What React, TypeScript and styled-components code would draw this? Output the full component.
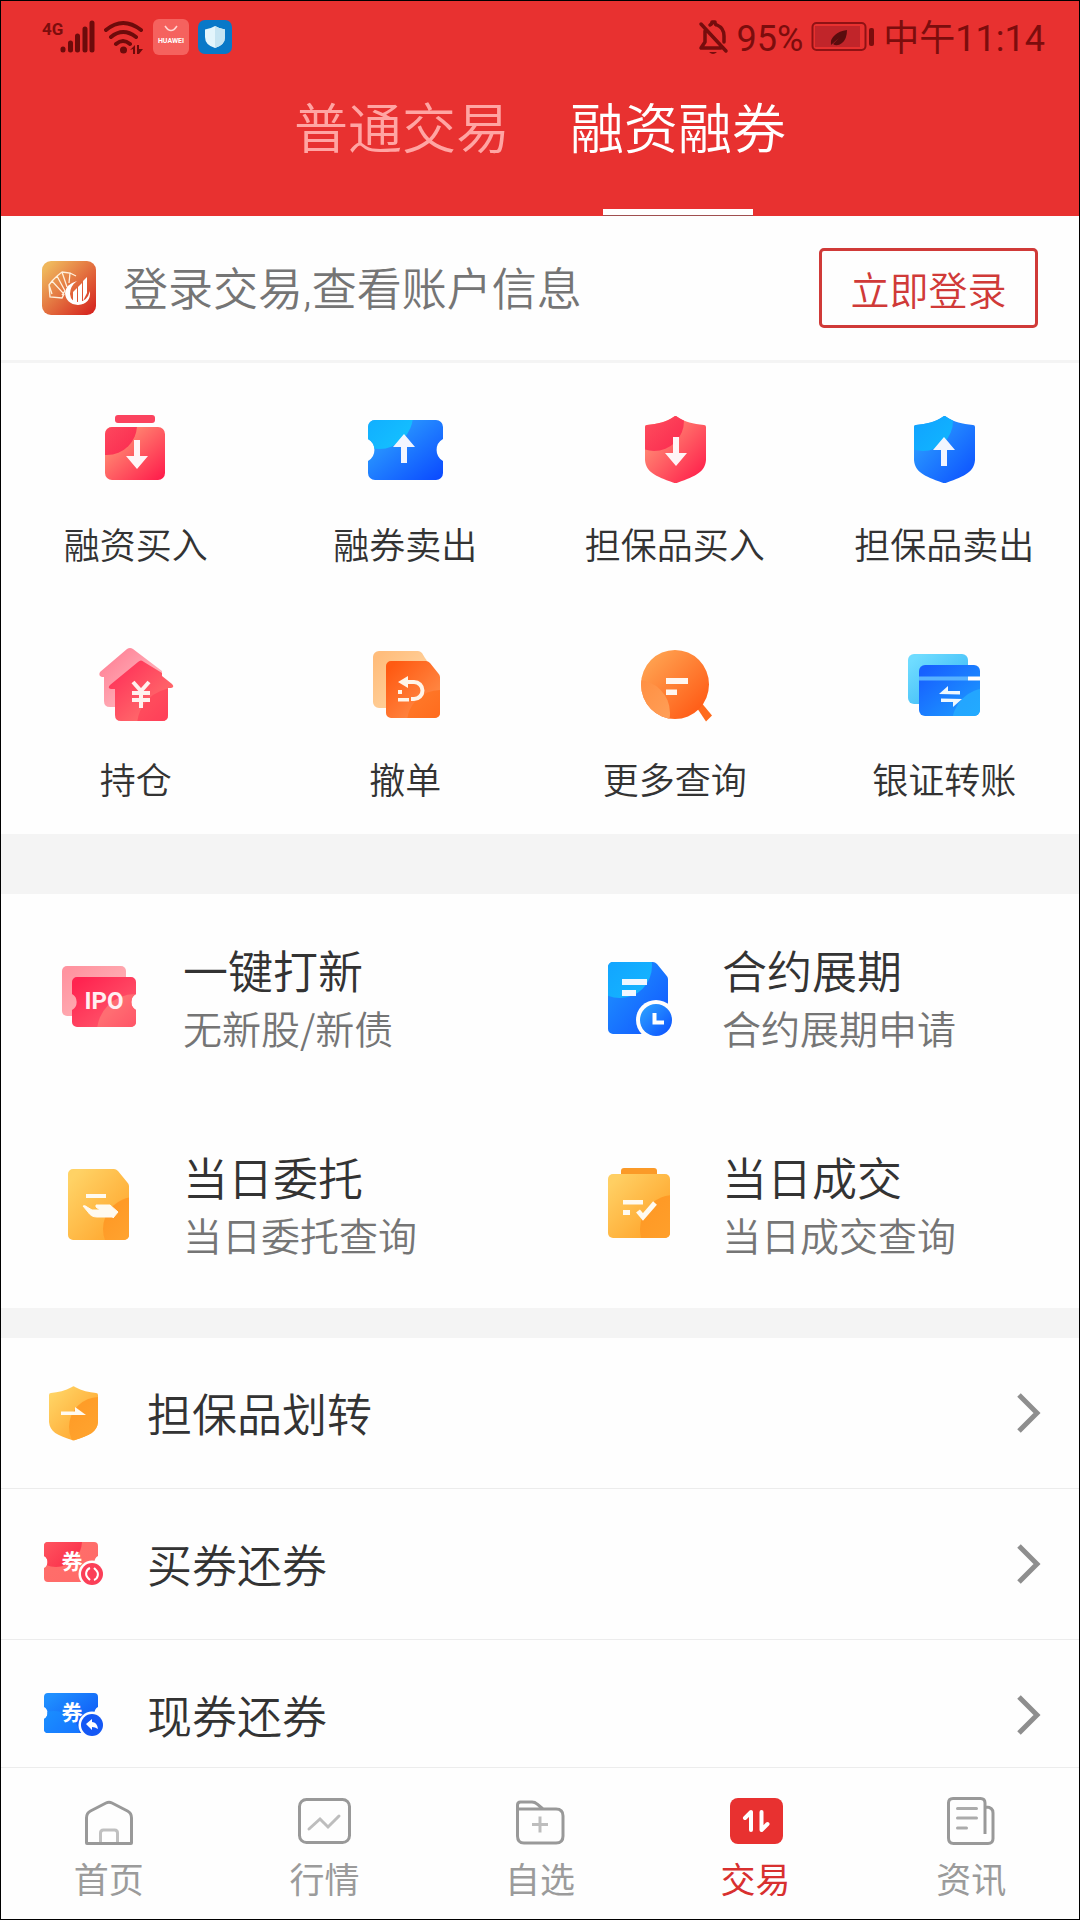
import React, { useId } from "react";
import styled, { createGlobalStyle, css } from "styled-components";

const RED = "#e83130";
const CJK = `"Noto Sans CJK SC", sans-serif`;

const GlobalStyle = createGlobalStyle`
  *, *::before, *::after { box-sizing: border-box; }
  body { margin: 0; background: #fff; }
  button { border: 0; padding: 0; background: none; font: inherit; color: inherit; cursor: pointer; }
  a { color: inherit; text-decoration: none; }
  svg { display: block; flex: none; }
`;

const Screen = styled.div`
  display: flex;
  flex-direction: column;
  height: 100vh;
  border: 1px solid #000;
  background: #fefefe;
  font-family: ${CJK};
  font-weight: 350;
  color: #333;
`;

const Header = styled.header`
  flex: none;
  background: ${RED};
`;

const StatusBar = styled.div`
  display: flex;
  justify-content: space-between;
  height: 72px;
  padding: 0 34px 0 40px;
  color: #7c0d0d;
  font-family: Roboto, ${CJK};
  font-size: 36px;
  font-weight: 400;
  line-height: 68px;
`;

const StatusText = styled.span`
  padding-top: 3px;
`;

const StatusGroup = styled.div<{ $gap: number }>`
  display: flex;
  align-items: center;
  gap: ${(p) => p.$gap}px;
`;

const Tabs = styled.div`
  display: flex;
  justify-content: center;
`;

const Tab = styled.button<{ $active?: boolean }>`
  display: flex;
  flex-direction: column;
  align-items: center;
  justify-content: space-between;
  width: 276px;
  height: 143px;
  padding-top: 13px;
  font-size: 54px;
  line-height: 80px;
  color: ${(p) => (p.$active ? "#fff" : "#ffa5a3")};

  &::after {
    content: "";
    width: 150px;
    height: 7px;
    background: ${(p) => (p.$active ? "#fff" : "transparent")};
    border-bottom: 1px solid ${(p) => (p.$active ? "#a04f4f" : "transparent")};
  }
`;

const Content = styled.main`
  flex: 1;
  min-height: 0;
  overflow-y: auto;
  scrollbar-width: none;
`;

const LoginBar = styled.section`
  display: flex;
  align-items: center;
  height: 147px;
  padding: 0 41px;
  border-bottom: 3px solid #f4f4f4;
`;

const LoginText = styled.p`
  flex: 1;
  margin: 0 0 0 27px;
  padding-top: 5px;
  font-family: Roboto, ${CJK};
  font-size: 45px;
  line-height: 66px;
  color: #757575;
`;

const LoginButton = styled.button`
  width: 219px;
  height: 80px;
  border: 3px solid #d03a38;
  border-radius: 5px;
  font-size: 39px;
  line-height: 72px;
  color: #d03a38;
`;

const ActionGrid = styled.section`
  display: grid;
  grid-template-columns: repeat(4, 1fr);
  padding-top: 1px;
`;

const Action = styled.button`
  display: flex;
  flex-direction: column;
  align-items: center;
  gap: 26px;
  height: 235px;
  padding-top: 46px;
  font-size: 36px;
  line-height: 54px;
`;

const Band = styled.div<{ $height: number }>`
  height: ${(p) => p.$height}px;
  background: #f4f4f4;
`;

const FeatureGrid = styled.section`
  display: grid;
  grid-template-columns: repeat(2, 1fr);
`;

const Feature = styled.button`
  display: flex;
  align-items: center;
  gap: 44px;
  height: 207px;
  padding: 4px 0 0 58px;
  text-align: left;
`;

const FeatureText = styled.span`
  display: block;
  padding-bottom: 5px;
`;

const FeatureTitle = styled.span`
  display: block;
  font-size: 45px;
  line-height: 60px;
`;

const FeatureNote = styled.span`
  display: block;
  font-size: 39px;
  line-height: 54px;
  color: #757575;
`;

const List = styled.ul`
  margin: 0;
  padding: 0;
  list-style: none;
`;

const ListItem = styled.li`
  border-bottom: 1px solid #ececec;
`;

const ListRow = styled.button`
  display: flex;
  align-items: center;
  width: 100%;
  height: 150px;
  padding: 0 38px 0 41px;
  font-size: 45px;
  line-height: 66px;
`;

const ListLabel = styled.span`
  flex: 1;
  margin-left: 41px;
  text-align: left;
`;

const NavBar = styled.nav`
  display: flex;
  flex: none;
  height: 152px;
  border-top: 1px solid #ececec;
`;

const NavLink = styled.a<{ $active?: boolean }>`
  flex: 1;
  display: flex;
  flex-direction: column;
  align-items: center;
  padding-top: 28px;
  font-size: 35px;
  line-height: 52px;
  font-weight: 400;
  color: #9b9b9b;
  ${(p) =>
    p.$active &&
    css`
      color: #d8302f;
    `}
`;

type Glow = { cx: number; cy: number; r: number; from: string; to: string };

/* A gradient silhouette with a circular highlight cut to its outline. */
function Shape({ d, from, to, glow }: { d: string; from: string; to: string; glow?: Glow }) {
  const id = useId().replace(/[^a-zA-Z0-9]/g, "");
  return (
    <>
      <defs>
        <linearGradient id={`${id}a`} x1="0" y1="0" x2="1" y2="1">
          <stop offset="0.1" stopColor={from} />
          <stop offset="0.95" stopColor={to} />
        </linearGradient>
        {glow && (
          <linearGradient id={`${id}b`} x1="0" y1="0" x2="1" y2="1">
            <stop offset="0.2" stopColor={glow.from} />
            <stop offset="0.9" stopColor={glow.to} />
          </linearGradient>
        )}
        <clipPath id={`${id}c`}>
          <path d={d} />
        </clipPath>
      </defs>
      <path d={d} fill={`url(#${id}a)`} />
      {glow && (
        <circle cx={glow.cx} cy={glow.cy} r={glow.r} fill={`url(#${id}b)`} clipPath={`url(#${id}c)`} />
      )}
    </>
  );
}

const box = (x: number, y: number, w: number, h: number, r: number) =>
  `M${x + r} ${y}h${w - 2 * r}a${r} ${r} 0 0 1 ${r} ${r}v${h - 2 * r}a${r} ${r} 0 0 1 ${-r} ${r}h${-(w - 2 * r)}a${r} ${r} 0 0 1 ${-r} ${-r}v${-(h - 2 * r)}a${r} ${r} 0 0 1 ${r} ${-r}z`;

const ticket = (x: number, y: number, w: number, h: number, r: number, n: number) => {
  const side = h / 2 - r - n;
  return `M${x + r} ${y}h${w - 2 * r}a${r} ${r} 0 0 1 ${r} ${r}v${side}a${n * 1.15} ${n * 1.15} 0 0 0 0 ${2 * n}v${side}a${r} ${r} 0 0 1 ${-r} ${r}h${-(w - 2 * r)}a${r} ${r} 0 0 1 ${-r} ${-r}v${-side}a${n * 1.15} ${n * 1.15} 0 0 0 0 ${-2 * n}v${-side}a${r} ${r} 0 0 1 ${r} ${-r}z`;
};

const cutSheet = (x: number, y: number, w: number, h: number, r: number, c: number) =>
  `M${x + r} ${y}h${w - r - c - 2}q2 0 4 2l${c - 4} ${c - 2}q2 2 2 4v${h - c - r - 4}a${r} ${r} 0 0 1 ${-r} ${r}h${-(w - 2 * r)}a${r} ${r} 0 0 1 ${-r} ${-r}v${-(h - 2 * r)}a${r} ${r} 0 0 1 ${r} ${-r}z`;

const SHIELD =
  "M38.5 7Q40.5 5 42.5 7C50 12 58 14 69 15Q71 15 71 17V50C70 62 61 66 43 72.500Q40.500 73.500 38 72.500C20 66 11 62 10 50V17Q10 15 12 15C23 14 31 12 38.500 7Z";

const Icon = ({ children, size = 80 }: { children: React.ReactNode; size?: number }) => (
  <svg width={size} height={size} viewBox={`0 0 ${size} ${size}`} fill="none" aria-hidden="true">
    {children}
  </svg>
);

const MarginBuy = () => (
  <Icon>
    <rect x="19" y="5" width="40" height="8" rx="3" fill="#fb435f" />
    <Shape d={box(9, 17, 60, 53, 7)} from="#ff9a78" to="#ff1f4c" glow={{ cx: 11, cy: 15, r: 30, from: "#ff5a66", to: "#fb2f52" }} />
    <path d="M38 30h6v16h8L41 59 30 46h8z" fill="#fff5f7" />
  </Icon>
);

const ShortSell = () => (
  <Icon>
    <Shape d={ticket(3, 10, 75, 60, 7, 11)} from="#2fa6ff" to="#0c4dff" glow={{ cx: 14, cy: 5, r: 34, from: "#10a5ff", to: "#14c0ff" }} />
    <path d="M39 24l11 13h-8v16h-6V37h-8z" fill="#f1f5ff" />
  </Icon>
);

const PledgeBuy = () => (
  <Icon>
    <Shape d={SHIELD} from="#ff9a7a" to="#ff1c4a" glow={{ cx: 19, cy: 11, r: 30, from: "#ff5a62", to: "#fb2e51" }} />
    <path d="M38 27h6v16h8L41 56 30 43h8z" fill="#fff5f7" />
  </Icon>
);

const PledgeSell = () => (
  <Icon>
    <Shape d={SHIELD} from="#2ea3ff" to="#0d52ff" glow={{ cx: 19, cy: 11, r: 30, from: "#129bff", to: "#10b4ff" }} />
    <path d="M40 27l11 13h-8v16h-6V40h-8z" fill="#f1f5ff" />
  </Icon>
);

const Holdings = () => (
  <Icon>
    <Shape
      d="M31 4Q34 2 37 4L66 26V62H14Q8 62 8 56V32H6Q2 31 4 27Z"
      from="#ff8095"
      to="#ffc4c8"
    />
    <Shape
      d="M42 17Q45 14 48 17L66 28V31L76 39Q79 42 75 43H72V70Q72 76 66 76H25Q19 76 19 70V44H15Q11 43 14 40Z"
      from="#ff3058"
      to="#ff7a70"
      glow={{ cx: 79, cy: 81, r: 38, from: "#ff4a5c", to: "#ff2350" }}
    />
    <path d="M37 37l8 9 8-9M45 46v17M36 48h18M36 55h18" stroke="#fff1ee" strokeWidth="4" />
  </Icon>
);

const CancelOrder = () => (
  <Icon>
    <Shape d={cutSheet(8, 6, 54, 57, 6, 7)} from="#ffbd7c" to="#ffd9a8" />
    <Shape d={cutSheet(21, 16, 54, 57, 5, 12)} from="#ff5a12" to="#ff9350" glow={{ cx: 75, cy: 78, r: 33, from: "#ff7526", to: "#ff5c10" }} />
    <path d="M33 37l10-6v4h6a10.500 10.500 0 0 1 0 21h-3v-4h3a6.500 6.500 0 0 0 0-13h-6v4z" fill="#fff4e8" />
    <path d="M33 45h4v4h-4zM33 53h11v3.500H33z" fill="#fff4e8" />
  </Icon>
);

const MoreSearch = () => (
  <Icon>
    <path d="M60 60l5-4 12 14.500-6 6z" fill="#ff6a1c" />
    <Shape d="M6 39.500a34 34.500 0 1 0 68 0a34 34.500 0 1 0 -68 0z" from="#ffa452" to="#ff5511" glow={{ cx: 2, cy: 68, r: 33, from: "#ff8d3f", to: "#ffa25c" }} />
    <path d="M31 33h22v6H31zM31 44.500h11v5.500H31z" fill="#fff6f0" />
  </Icon>
);

const BankTransfer = () => (
  <Icon>
    <Shape d={box(4, 9, 60, 50, 6)} from="#6fdcff" to="#35b4f5" />
    <Shape d={box(15, 20, 61, 51, 6)} from="#1760ff" to="#1d9cff" glow={{ cx: 84, cy: 79, r: 36, from: "#23a6ff", to: "#1fb9ff" }} />
    <path d="M15 31.500h49v4H15z" fill="#58b2ff" />
    <path d="M64 31.500h12v4H64z" fill="#fff" />
    <path d="M35 49l9-8v5h12v3.500zM58 54l-9 8v-5H37v-3.500z" fill="#eef8ff" />
  </Icon>
);

const Ipo = () => (
  <Icon>
    <Shape d={box(3, 6, 64, 50, 5)} from="#ff94a0" to="#ffb9bc" />
    <Shape d={ticket(13, 17, 64, 50, 5, 8)} from="#ff2450" to="#ff6070" glow={{ cx: 76, cy: 72, r: 38, from: "#ff6d72", to: "#ff2f57" }} />
    <text x="45" y="49" textAnchor="middle" fontFamily="Roboto, sans-serif" fontSize="24" fontWeight="700" fill="#fff0f2">
      IPO
    </text>
  </Icon>
);

const Contract = () => (
  <Icon>
    <Shape d={cutSheet(10, 2, 60, 72, 5, 13)} from="#1e90ff" to="#1258ff" glow={{ cx: 22, cy: 6, r: 32, from: "#12a0ff", to: "#14b4ff" }} />
    <path d="M24 19h25v6H24zM24 30h14v6H24z" fill="#f0f7ff" />
    <circle cx="58" cy="60" r="20" fill="#fefefe" />
    <Shape d={box(42, 44, 32, 32, 16)} from="#2a9dff" to="#0d53ff" />
    <path d="M56.500 53v9.500H66" stroke="#fff" strokeWidth="4" />
  </Icon>
);

const Entrust = () => (
  <Icon>
    <Shape d={cutSheet(9, 2, 61, 71, 5, 13)} from="#ffd265" to="#ffa32a" glow={{ cx: 76, cy: 62, r: 32, from: "#ff9a26", to: "#ffad3a" }} />
    <path d="M27 27h20v4H27z" fill="#fffaf0" />
    <path d="M24 39q2-1 4 1l5 3h8l-4-3v-2h14l8 7-5 6v-1H38q-6 0-9-5z" fill="#fffaf0" stroke="#fffaf0" strokeLinejoin="round" />
  </Icon>
);

const Deals = () => (
  <Icon>
    <path d="M23 8V4q0-3 3-3h30q3 0 3 3v4z" fill="#fb9a28" />
    <Shape d={box(10, 7, 62, 64, 5)} from="#ffcf63" to="#ff9f24" glow={{ cx: 76, cy: 62, r: 34, from: "#ff9a26", to: "#ffa530" }} />
    <path d="M25 33h20v4.500H25zM25 43h7v5h-7z" fill="#fffaf0" />
    <path d="M40 44l5 6 12-14" stroke="#fffaf0" strokeWidth="5" />
  </Icon>
);

const TransferShield = () => (
  <Icon size={64}>
    <Shape
      d="M30 6Q31.500 4.500 33 6C40 10 47 11 54 12Q56 12 56 14V41C55 51 48 54 33 59Q31.500 59.500 30 59C15 54 8 51 7 41V14Q7 12 9 12C16 11 23 10 30 6Z"
      from="#ffd364"
      to="#ff9f28"
      glow={{ cx: 57, cy: 46, r: 30, from: "#ff9d28", to: "#ffab36" }}
    />
    <path d="M19 30.500h14v-4.500l11 8H19z" fill="#fffaf0" />
  </Icon>
);

const couponText = (
  <text x="30" y="37" textAnchor="middle" fontFamily={CJK} fontSize="21" fontWeight="700" fill="#fff">
    券
  </text>
);

const CouponRed = () => (
  <Icon size={64}>
    <Shape d={ticket(2, 10, 54, 40, 4, 6)} from="#ff6f6b" to="#ff6a68" glow={{ cx: 14, cy: 9, r: 26, from: "#ff6468", to: "#fb2f4a" }} />
    {couponText}
    <circle cx="50" cy="42" r="13.500" fill="#fefefe" />
    <circle cx="50" cy="42" r="11" fill="#fb3f58" />
    <path d="M48 36a6 6 0 0 0-2 10l2 2M52 48a6 6 0 0 0 2-10l-2-2" stroke="#fff" strokeWidth="2" />
  </Icon>
);

const CouponBlue = () => (
  <Icon size={64}>
    <Shape d={ticket(2, 10, 54, 40, 4, 6)} from="#2090ff" to="#0b50f5" glow={{ cx: 12, cy: 54, r: 26, from: "#1a8dff", to: "#146cff" }} />
    {couponText}
    <circle cx="50" cy="42" r="13.500" fill="#fefefe" />
    <circle cx="50" cy="42" r="11" fill="#1458f5" />
    <path d="M44 41l6-5v3q5 0 6 7-3-2-6-2v3z" fill="#fff" />
  </Icon>
);

const Chevron = () => (
  <svg width="26" height="42" viewBox="0 0 26 42" fill="none" aria-hidden="true">
    <path d="M4 3l18 18L4 39" stroke="#8e8e8e" strokeWidth="5" />
  </svg>
);

const HomeIcon = () => (
  <Icon size={56}>
    <path d="M19.500 48V37q0-3 3-3h11q3 0 3 3v11" stroke="#c0c0c0" strokeWidth="3" />
    <path d="M5.500 47V22q0-5 4-7L25 7q3-1.500 6 0l15.500 8q4 2 4 7v25q0 .5-.5.5H6q-.5 0-.5-.5z" stroke="#999" strokeWidth="3" />
  </Icon>
);

const ChartIcon = () => (
  <Icon size={56}>
    <rect x="3.500" y="3.500" width="50" height="43" rx="7" stroke="#999" strokeWidth="3" />
    <path d="M13 33l11-10 8 8 11-11" stroke="#bdbdbd" strokeWidth="3" strokeLinecap="round" />
  </Icon>
);

const FolderIcon = () => (
  <Icon size={56}>
    <path d="M5.500 13V9q0-3 3-3H20q3 0 5 2l6 5h13q7 0 7 7v20q0 7-7 7H12q-6.500 0-6.500-7zh26" stroke="#999" strokeWidth="3" />
    <path d="M20 28.500h16M28 20.500v16" stroke="#bdbdbd" strokeWidth="3" />
  </Icon>
);

const TradeIcon = () => (
  <Icon size={56}>
    <rect x="2" y="2" width="53" height="46" rx="8" fill={RED} />
    <path d="M17 22l6-6v18M33.500 16v18l6-6" stroke="#fff" strokeWidth="4" strokeLinecap="round" strokeLinejoin="round" />
  </Icon>
);

const NewsIcon = () => (
  <Icon size={56}>
    <path d="M42 38V7q0-4.500-4.500-4.500H10Q5.500 2.500 5.500 7v35q0 5.500 5 5.500H45q5 0 5-5V17q0-6-7-6" stroke="#999" strokeWidth="3" />
    <path d="M14.500 12.500h19M14.500 22h19M14.500 32h9" stroke="#ababab" strokeWidth="3" strokeLinecap="round" />
  </Icon>
);

const BrandLogo = () => (
  <svg width="54" height="54" viewBox="0 0 54 54" fill="none" aria-hidden="true">
    <Shape d={box(0, 0, 54, 54, 9)} from="#efb65c" to="#d6251f" />
    <path
      d="M7 24l3-4 12 13-2 4-12-1zM10 20l5-5 8 15-3 4M15 15l5-4 5 15M20 11l8 1-1 10M28 12l6 3M7 24l3 9"
      stroke="#fff0dc"
      strokeWidth="1.300"
    />
    <path d="M35 20q-7 5-7 13 1 8 8 8 9 0 12-11 1 13-12 14-12-1-13-12 1-9 12-12z" fill="#fff" />
    <path d="M31 31l4-4v15h-4zM36 26l4-4v20h-4zM41 20l4-4v16l-4 8z" fill="#fff" />
  </svg>
);

const LeftStatus = () => (
  <StatusGroup $gap={9}>
    <svg width="54" height="36" viewBox="0 0 54 36" aria-hidden="true">
      <text x="1" y="16" fontFamily="Roboto, sans-serif" fontSize="17" fontWeight="700" fill="#7c0d0d">4G</text>
      <g stroke="#6d0b0b" strokeWidth="5" strokeLinecap="round">
        <path d="M22 31v-1M29.500 31v-7M36.500 31V17M44 31V10M51 31V4" />
      </g>
    </svg>
    <svg width="40" height="36" viewBox="0 0 40 36" fill="none" aria-hidden="true">
      <path d="M2 11Q19-3 37 11M7 18q12-10 25 0M12 25q7-6 14 0" stroke="#6d0b0b" strokeWidth="4" strokeLinecap="round" />
      <circle cx="19.500" cy="31" r="3.500" fill="#6d0b0b" />
      <path d="M26 31l5-5v9h-2v-5zM33 26h2v4l4 0-4 5h-2z" fill="#6d0b0b" />
    </svg>
    <svg width="36" height="36" viewBox="0 0 36 36" fill="none" aria-hidden="true">
      <rect width="36" height="36" rx="6" fill="#f5625e" />
      <path d="M12 7q6 9 12 0" stroke="#ffd5d2" strokeWidth="1.500" />
      <text x="18" y="24" textAnchor="middle" fontFamily="Roboto, sans-serif" fontSize="7" fontWeight="700" fill="#fff">HUAWEI</text>
    </svg>
    <svg width="34" height="34" viewBox="0 0 34 34" aria-hidden="true">
      <rect width="34" height="34" rx="7" fill="#0878c8" />
      <path d="M17 6q5 3 10 3.500V17q0 8-10 11Q7 25 7 17V9.500Q12 9 17 6z" fill="#e3f5fc" />
      <path d="M17 6q5 3 10 3.500V17q0 8-10 11z" fill="#c5e4f2" />
    </svg>
  </StatusGroup>
);

const RightStatus = () => (
  <StatusGroup $gap={8}>
    <svg width="32" height="36" viewBox="0 0 32 36" fill="none" aria-hidden="true">
      <g stroke="#760d0d" strokeWidth="3.500" strokeLinecap="round" strokeLinejoin="round">
        <path d="M4 5l25 27M13 6q2-1 2-3h3q0 3 2 3 7 3 7 11v6M8 12v11l-4 6h20" />
      </g>
      <path d="M12 33h8q-4 4-8 0z" fill="#760d0d" />
    </svg>
    <StatusText>95%</StatusText>
    <svg width="64" height="32" viewBox="0 0 64 32" fill="none" aria-hidden="true">
      <rect x="1.500" y="2" width="53" height="27" rx="4" stroke="#8f1214" strokeWidth="2" />
      <rect x="4" y="5" width="45" height="21" fill="#c1252a" />
      <path d="M20 24q-1-6 4-10 4-4 12-5 0 9-5 13-5 4-9 1l6-6-8 7z" fill="#5a0c0e" />
      <rect x="58" y="7" width="5" height="18" rx="2" fill="#7c0d0d" />
    </svg>
    <StatusText>中午11:14</StatusText>
  </StatusGroup>
);

const actions = [
  { label: "融资买入", Glyph: MarginBuy },
  { label: "融券卖出", Glyph: ShortSell },
  { label: "担保品买入", Glyph: PledgeBuy },
  { label: "担保品卖出", Glyph: PledgeSell },
  { label: "持仓", Glyph: Holdings },
  { label: "撤单", Glyph: CancelOrder },
  { label: "更多查询", Glyph: MoreSearch },
  { label: "银证转账", Glyph: BankTransfer },
];

const features = [
  { title: "一键打新", note: "无新股/新债", Glyph: Ipo },
  { title: "合约展期", note: "合约展期申请", Glyph: Contract },
  { title: "当日委托", note: "当日委托查询", Glyph: Entrust },
  { title: "当日成交", note: "当日成交查询", Glyph: Deals },
];

const rows = [
  { label: "担保品划转", Glyph: TransferShield },
  { label: "买券还券", Glyph: CouponRed },
  { label: "现券还券", Glyph: CouponBlue },
];

const navItems = [
  { label: "首页", Glyph: HomeIcon },
  { label: "行情", Glyph: ChartIcon },
  { label: "自选", Glyph: FolderIcon },
  { label: "交易", Glyph: TradeIcon, active: true },
  { label: "资讯", Glyph: NewsIcon },
];

export default function App() {
  return (
    <>
      <GlobalStyle />
      <Screen lang="zh-CN">
        <Header>
          <StatusBar>
            <LeftStatus />
            <RightStatus />
          </StatusBar>
          <Tabs role="tablist">
            <Tab role="tab" aria-selected={false}>普通交易</Tab>
            <Tab role="tab" aria-selected $active>融资融券</Tab>
          </Tabs>
        </Header>
        <Content>
          <LoginBar>
            <BrandLogo />
            <LoginText>登录交易,查看账户信息</LoginText>
            <LoginButton>立即登录</LoginButton>
          </LoginBar>
          <ActionGrid>
            {actions.map(({ label, Glyph }) => (
              <Action key={label}>
                <Glyph />
                {label}
              </Action>
            ))}
          </ActionGrid>
          <Band $height={60} />
          <FeatureGrid>
            {features.map(({ title, note, Glyph }) => (
              <Feature key={title}>
                <Glyph />
                <FeatureText>
                  <FeatureTitle>{title}</FeatureTitle>
                  <FeatureNote>{note}</FeatureNote>
                </FeatureText>
              </Feature>
            ))}
          </FeatureGrid>
          <Band $height={30} />
          <List>
            {rows.map(({ label, Glyph }) => (
              <ListItem key={label}>
                <ListRow>
                  <Glyph />
                  <ListLabel>{label}</ListLabel>
                  <Chevron />
                </ListRow>
              </ListItem>
            ))}
          </List>
        </Content>
        <NavBar>
          {navItems.map(({ label, Glyph, active }) => (
            <NavLink key={label} href="#" $active={active} aria-current={active ? "page" : undefined}>
              <Glyph />
              {label}
            </NavLink>
          ))}
        </NavBar>
      </Screen>
    </>
  );
}
